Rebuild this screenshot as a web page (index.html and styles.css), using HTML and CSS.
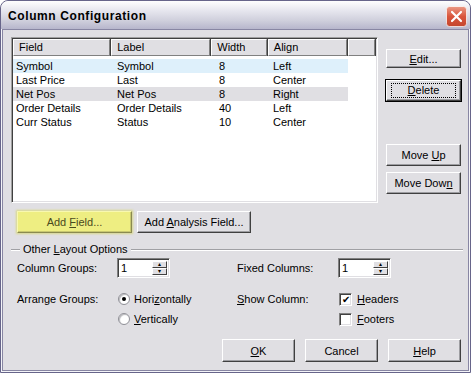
FILE: index.html
```html
<!DOCTYPE html>
<html lang="en">
<head>
  <meta charset="UTF-8">
  <title>Column Configuration</title>
  <link rel="stylesheet" href="styles.css">
</head>
<body>

  <div class="window">
    <!-- Barra de titulo -->
    <div class="titlebar">
      <span class="title">Column Configuration</span>
      <span class="close">
        <svg width="21" height="21" viewBox="0 0 21 21">
          <defs>
            <linearGradient id="red" x1="0" y1="0" x2="0" y2="1">
              <stop offset="0" stop-color="#ea9a86"/>
              <stop offset="0.5" stop-color="#d9553c"/>
              <stop offset="1" stop-color="#c4452e"/>
            </linearGradient>
          </defs>
          <rect x="0.5" y="0.5" width="20" height="20" rx="3" fill="url(#red)" stroke="#fff" stroke-opacity="0.7"/>
          <path d="M6 6 L15 15 M15 6 L6 15" stroke="#fff" stroke-width="2.2" stroke-linecap="round"/>
        </svg>
      </span>
    </div>

    <div class="content">
      <div class="top">
        <!-- Lista de colunas -->
        <div class="list">
          <div class="list-header">
            <div class="hcell c1">Field</div>
            <div class="hcell c2">Label</div>
            <div class="hcell c3">Width</div>
            <div class="hcell c4">Align</div>
            <div class="hcell c5"></div>
          </div>
          <div class="row hover">
            <div class="cell c1">Symbol</div><div class="cell c2">Symbol</div><div class="cell c3">8</div><div class="cell c4">Left</div>
          </div>
          <div class="row">
            <div class="cell c1">Last Price</div><div class="cell c2">Last</div><div class="cell c3">8</div><div class="cell c4">Center</div>
          </div>
          <div class="row selected">
            <div class="cell c1">Net Pos</div><div class="cell c2">Net Pos</div><div class="cell c3">8</div><div class="cell c4">Right</div>
          </div>
          <div class="row">
            <div class="cell c1">Order Details</div><div class="cell c2">Order Details</div><div class="cell c3">40</div><div class="cell c4">Left</div>
          </div>
          <div class="row">
            <div class="cell c1">Curr Status</div><div class="cell c2">Status</div><div class="cell c3">10</div><div class="cell c4">Center</div>
          </div>
        </div>

        <div class="side">
          <button class="btn edit"><u>E</u>dit...</button>
          <button class="btn default"><span class="focus"><u>D</u>elete</span></button>
          <button class="btn up">Move <u>U</u>p</button>
          <button class="btn down">Move Dow<u>n</u></button>
        </div>
      </div>

      <div class="add-row">
        <button class="btn add-field">Add <u>F</u>ield...</button>
        <button class="btn add-analysis">Add <u>A</u>nalysis Field...</button>
      </div>

      <!-- Outras opcoes -->
      <div class="group-title"><span>Other <u>L</u>ayout Options</span></div>

      <div class="options">
        <div class="opt-row first">
          <span class="lbl">Column Groups:</span>
          <span class="ctl"><span class="spin"><span class="spin-text">1</span><span class="spin-btns"><span class="arrow">&#9652;</span><span class="arrow">&#9662;</span></span></span></span>
          <span class="lbl">Fixed Columns:</span>
          <span class="ctl"><span class="spin"><span class="spin-text">1</span><span class="spin-btns"><span class="arrow">&#9652;</span><span class="arrow">&#9662;</span></span></span></span>
        </div>
        <div class="opt-row second">
          <span class="lbl">Arrange Groups:</span>
          <span class="ctl"><span class="radio checked"></span><span>Hori<u>z</u>ontally</span></span>
          <span class="lbl"><u>S</u>how Column:</span>
          <span class="ctl"><span class="check checked">&#10004;</span><span><u>H</u>eaders</span></span>
        </div>
        <div class="opt-row third">
          <span class="lbl"></span>
          <span class="ctl"><span class="radio"></span><span><u>V</u>ertically</span></span>
          <span class="lbl"></span>
          <span class="ctl"><span class="check"></span><span><u>F</u>ooters</span></span>
        </div>
      </div>

      <div class="footer">
        <button class="btn big"><u>O</u>K</button>
        <button class="btn big">Cancel</button>
        <button class="btn big"><u>H</u>elp</button>
      </div>
    </div>
  </div>

</body>
</html>
```

FILE: styles.css
```css
* {
  box-sizing: border-box;
  margin: 0;
  padding: 0;
}

body {
  font-family: "Liberation Sans", Arial, sans-serif;
  font-size: 11px;
  color: #000;
  background: #fff;
}

u {
  text-decoration: underline;
  text-underline-offset: 1px;
}

/* Janela */
.window {
  width: 471px;
  height: 373px;
  border: 1px solid #67658a;
  border-radius: 8px 8px 0 0;
  background: #f4f4f8;
  padding: 0 1px 1px;
  display: flex;
  flex-direction: column;
  overflow: hidden;
}

.titlebar {
  height: 28px;
  margin: 0 -1px;
  display: flex;
  align-items: center;
  justify-content: space-between;
  padding: 0 3px 0 7px;
  background: linear-gradient(#fefefe 0%, #e6e6ee 35%, #cfcfdc 70%, #b7b6cc 100%);
  border-radius: 7px 7px 0 0;
}

.title {
  font-weight: bold;
  font-size: 12px;
  letter-spacing: 0.6px;
  margin-top: 2px;
}

.close {
  display: flex;
  margin-top: 2px;
}

.content {
  flex: 1;
  background: #e0dfe3;
  border: 1px solid #8886a3;
  display: flex;
  flex-direction: column;
}

.top {
  display: flex;
  margin-top: 7px;
  padding-left: 8px;
}

/* Lista */
.list {
  width: 367px;
  height: 166px;
  background: #fff;
  border: 1px solid;
  border-color: #a0a0a0 #fff #fff #a0a0a0;
  box-shadow: inset 1px 1px 0 #404040, inset -1px -1px 0 #e0dfe3;
  padding: 1px;
}

.list-header {
  display: flex;
  height: 17px;
}

.hcell {
  height: 17px;
  line-height: 15px;
  padding-left: 5px;
  background: #e0dfe3;
  border: 1px solid;
  border-color: #fff #808080 #808080 #fff;
  box-shadow: 1px 0 0 #404040;
  margin-right: 1px;
  white-space: nowrap;
  overflow: hidden;
}

.c1 { width: 98px; }
.c2 { width: 100px; }
.c3 { width: 56px; }
.c4 { width: 80px; }
.c5 { width: 27px; }

.cell.c1 { width: 99px; padding-left: 3px; }
.cell.c2 { width: 100px; padding-left: 5px; }
.cell.c3 { width: 56px; padding-left: 7px; }
.cell.c4 { width: 80px; padding-left: 5px; }

.list-header + .row {
  margin-top: 3px;
}

.row {
  display: flex;
  width: 335px;
  height: 14px;
  line-height: 14px;
  white-space: nowrap;
}

.row.hover {
  background: #def0fb;
}

.row.selected {
  background: #e0dfe3;
}

/* Botoes */
.btn {
  display: block;
  font-family: inherit;
  font-size: 11px;
  color: #000;
  text-align: center;
  white-space: nowrap;
  background: #e0dfe3;
  border: 1px solid;
  border-color: #fff #404040 #404040 #fff;
  box-shadow: inset -1px -1px 0 #9d9da1;
}

.side {
  display: flex;
  flex-direction: column;
  margin-left: 8px;
}

.side .btn {
  width: 75px;
  height: 22px;
}

.side .edit {
  height: 19px;
  margin-top: 12px;
}

.side .default {
  height: 21px;
  margin-top: 12px;
  outline: 1px solid #000;
  outline-offset: 0;
}

.focus {
  display: inline-block;
  border: 1px dotted #000;
  width: 65px;
  height: 15px;
  line-height: 13px;
  text-align: center;
}

.side .up {
  margin-top: 43px;
}

.side .down {
  margin-top: 6px;
}

.add-row {
  display: flex;
  gap: 5px;
  margin-top: 8px;
  padding-left: 14px;
}

.add-row .btn {
  height: 22px;
}

.btn.add-field {
  width: 115px;
  color: #4a4a20;
  background: #eeee82;
  border-color: #f8f8b0 #8a8a50 #8a8a50 #f8f8b0;
  box-shadow: 0 0 2px 1px #d8d88a, inset -1px -1px 0 #c8c870;
}

.add-analysis {
  width: 114px;
}

/* Grupo */
.group-title {
  position: relative;
  margin: 10px 5px 0 8px;
  height: 13px;
  display: flex;
  align-items: center;
}

.group-title::before {
  content: "";
  position: absolute;
  left: 0;
  right: 0;
  top: 6px;
  border-top: 1px solid #a0a0a4;
  border-bottom: 1px solid #fff;
}

.group-title span {
  position: relative;
  background: #e0dfe3;
  padding: 0 3px;
  margin-left: 9px;
  line-height: 13px;
}

.options {
  padding-left: 14px;
}

.opt-row {
  display: grid;
  grid-template-columns: 100px 120px 101px 1fr;
  align-items: center;
}

.opt-row.first {
  margin-top: 2px;
  height: 20px;
}

.opt-row.second {
  margin-top: 14px;
  height: 14px;
}

.opt-row.third {
  margin-top: 6px;
  height: 14px;
}

.ctl {
  display: flex;
  align-items: center;
}

/* Spin */
.spin {
  width: 53px;
  height: 20px;
  display: flex;
  background: #fff;
  border: 1px solid;
  border-color: #808080 #fff #fff #808080;
  box-shadow: inset 1px 1px 0 #404040, inset -1px -1px 0 #e0dfe3;
  padding: 2px;
}

.spin-text {
  flex: 1;
  line-height: 14px;
  padding-left: 1px;
}

.spin-btns {
  width: 15px;
  display: flex;
  flex-direction: column;
}

.arrow {
  flex: 1;
  background: #e0dfe3;
  border: 1px solid;
  border-color: #fff #404040 #404040 #fff;
  font-size: 6px;
  line-height: 5px;
  text-align: center;
}

/* Radio e checkbox */
.radio {
  width: 12px;
  height: 12px;
  border-radius: 50%;
  background: #fff;
  border: 1px solid #8f8f96;
  box-shadow: inset 1px 1px 1px #b8b8bc;
  margin: 0 4px 0 1px;
  display: flex;
  align-items: center;
  justify-content: center;
}

.radio.checked::after {
  content: "";
  width: 4px;
  height: 4px;
  border-radius: 50%;
  background: #000;
}

.check {
  width: 13px;
  height: 13px;
  background: #fff;
  border: 1px solid;
  border-color: #808080 #fff #fff #808080;
  box-shadow: inset 1px 1px 0 #404040, inset -1px -1px 0 #e0dfe3;
  margin: 0 5px 0 1px;
  font-size: 10px;
  line-height: 11px;
  text-align: center;
}

.footer {
  display: flex;
  justify-content: flex-end;
  gap: 10px;
  margin-top: 13px;
  padding-right: 7px;
}

.btn.big {
  width: 73px;
  height: 23px;
}
```
